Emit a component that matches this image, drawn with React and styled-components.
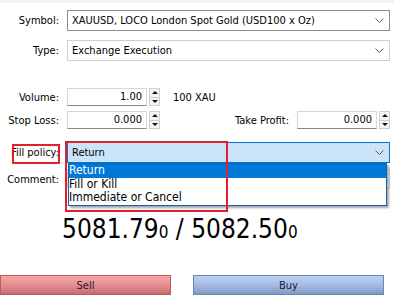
import React from 'react';
import styled, { createGlobalStyle } from 'styled-components';

const GlobalStyle = createGlobalStyle`
  html, body {
    margin: 0;
    padding: 0;
    background: #fff;
  }
  body {
    font-family: "DejaVu Sans Condensed", "DejaVu Sans", sans-serif;
    font-size: 11px;
    color: #000;
  }
`;

const Page = styled.div`
  width: 394px;
  height: 298px;
  overflow: hidden;
  background: #fff;
`;

const TopStrip = styled.div`
  height: 3px;
  background: #f0f3fa;
`;

const Form = styled.div`
  display: flex;
  flex-direction: column;
  padding: 7px 4px 0 0;
`;

const Row = styled.div`
  display: flex;
  align-items: center;
  margin-top: ${p => p.gap || 0}px;
  position: relative;
`;

const Label = styled.div`
  width: ${p => p.w || 59}px;
  text-align: right;
  margin-right: ${p => p.mr || 8}px;
  white-space: nowrap;
  position: relative;
`;

const Combo = styled.div`
  flex: 1;
  height: 21px;
  box-sizing: border-box;
  display: flex;
  align-items: center;
  justify-content: space-between;
  padding: 0 5px 0 4px;
  border: 1px solid ${p => (p.open ? '#0078d7' : p.dark ? '#8c8c8c' : '#d0d0d0')};
  background: ${p => (p.open ? '#cce4f7' : '#fff')};
  position: relative;
`;

const Chevron = () => (
  <svg width="9" height="5" viewBox="0 0 9 5">
    <polyline points="0.5,0.5 4.5,4.5 8.5,0.5" fill="none" stroke="#5a5a5a" strokeWidth="1" />
  </svg>
);

const NumInput = styled.div`
  width: ${p => p.w || 80}px;
  height: 18px;
  box-sizing: border-box;
  border: 1px solid #d6d6d6;
  border-bottom-color: #8a8a8a;
  text-align: right;
  padding-right: 4px;
  line-height: 16px;
`;

const Spinner = styled.div`
  width: 11px;
  height: 18px;
  box-sizing: border-box;
  margin-left: 2px;
  border: 1px solid #cfcfcf;
  background: #f4f4f4;
  display: flex;
  flex-direction: column;
`;

const SpinHalf = styled.div`
  flex: 1;
  display: flex;
  align-items: center;
  justify-content: center;
  border-top: ${p => (p.down ? '1px solid #cfcfcf' : 'none')};

  &::after {
    content: '';
    border-left: 3px solid transparent;
    border-right: 3px solid transparent;
    ${p => (p.down ? 'border-top: 3px solid #111;' : 'border-bottom: 3px solid #111;')}
  }
`;

const Unit = styled.div`
  margin-left: 13px;
`;

const Spacer = styled.div`
  flex: 1;
`;

const Highlight = styled.div`
  position: absolute;
  border: 2px solid #e2202c;
  pointer-events: none;
`;

const DropList = styled.div`
  position: absolute;
  top: 20px;
  left: 0;
  right: 2px;
  background: #fff;
  border: 1px solid #0a64b8;
  box-shadow: 2px 2px 2px rgba(0, 0, 0, 0.35);
  z-index: 2;
`;

const Option = styled.div`
  height: 13.5px;
  line-height: 13px;
  font-size: 12px;
  background: ${p => (p.selected ? '#0078d7' : 'transparent')};
  color: ${p => (p.selected ? '#fff' : '#000')};
`;

const CommentBox = styled.div`
  flex: 1;
  height: 20px;
  box-sizing: border-box;
  border: 1px solid #d6d6d6;
`;

const Price = styled.div`
  margin-top: 25px;
  padding-left: 62px;
  font-size: 26px;
  line-height: 30px;
  white-space: nowrap;
`;

const Small = styled.span`
  font-size: 17px;
`;

const Buttons = styled.div`
  display: flex;
  margin-top: 28px;
  padding-right: 6px;
  justify-content: space-between;
`;

const TradeButton = styled.div`
  width: ${p => p.w}px;
  height: 20px;
  box-sizing: border-box;
  display: flex;
  align-items: center;
  justify-content: center;
  border: 1px solid ${p => (p.kind === 'sell' ? '#bd5a5e' : '#6e84b2')};
  background: ${p =>
    p.kind === 'sell'
      ? 'linear-gradient(#f4a5a6, #e68f90 50%, #c46c6e)'
      : 'linear-gradient(#bcd0f2, #a4bbe4 50%, #7f98c6)'};
  color: #1a1a2a;
`;

export default function App() {
  return (
    <Page>
      <GlobalStyle />
      <TopStrip />
      <Form>
        <Row>
          <Label>Symbol:</Label>
          <Combo dark>
            <span>XAUUSD, LOCO London Spot Gold (USD100 x Oz)</span>
            <Chevron />
          </Combo>
        </Row>
        <Row gap={9}>
          <Label>Type:</Label>
          <Combo>
            <span>Exchange Execution</span>
            <Chevron />
          </Combo>
        </Row>
        <Row gap={27}>
          <Label>Volume:</Label>
          <NumInput>1.00</NumInput>
          <Spinner>
            <SpinHalf />
            <SpinHalf down />
          </Spinner>
          <Unit>100 XAU</Unit>
        </Row>
        <Row gap={5}>
          <Label>Stop Loss:</Label>
          <NumInput>0.000</NumInput>
          <Spinner>
            <SpinHalf />
            <SpinHalf down />
          </Spinner>
          <Spacer />
          <Label w={70}>Take Profit:</Label>
          <NumInput>0.000</NumInput>
          <Spinner>
            <SpinHalf />
            <SpinHalf down />
          </Spinner>
        </Row>
        <Row gap={13} style={{ zIndex: 2 }}>
          <Label>
            Fill policy:
            <Highlight style={{ left: 12, right: -1, top: -2, bottom: -5 }} />
          </Label>
          <Combo open>
            <span>Return</span>
            <Chevron />
            <DropList>
              <Option selected>Return</Option>
              <Option>Fill or Kill</Option>
              <Option>Immediate or Cancel</Option>
            </DropList>
            <Highlight style={{ left: -3, width: 159, top: -2, height: 67, zIndex: 3 }} />
          </Combo>
        </Row>
        <Row gap={6}>
          <Label>Comment:</Label>
          <CommentBox />
        </Row>
        <Price>
          5081.79<Small>0</Small> / 5082.50<Small>0</Small>
        </Price>
        <Buttons>
          <TradeButton kind="sell" w={171}>Sell</TradeButton>
          <TradeButton kind="buy" w={191}>Buy</TradeButton>
        </Buttons>
      </Form>
    </Page>
  );
}
